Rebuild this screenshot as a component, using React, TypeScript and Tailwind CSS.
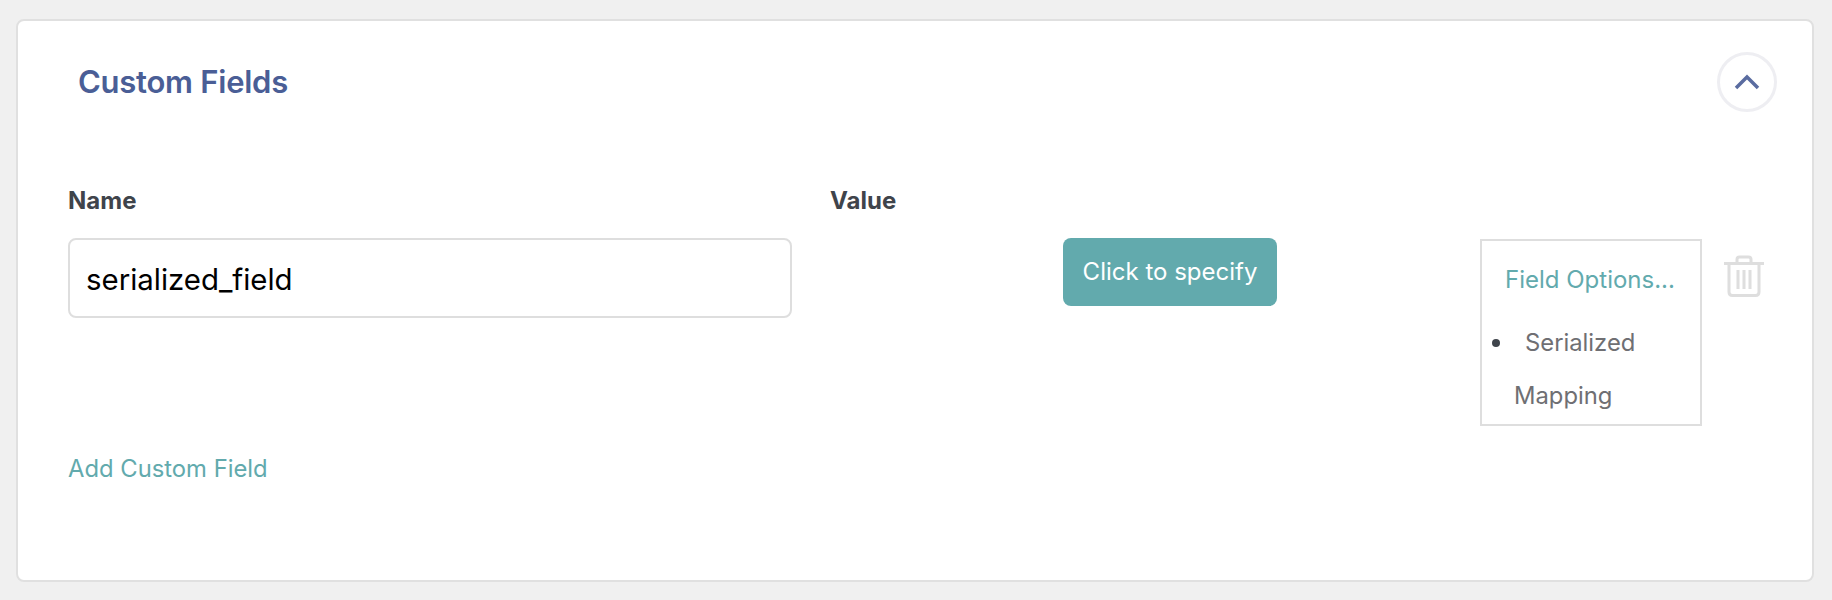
import React from "react";

const font = { fontFamily: "Inter, sans-serif" };

const TrashIcon = () => (
  <svg viewBox="0 0 40 42" className="w-[40px] h-[42px]" fill="none" stroke="#dedede" strokeWidth="3">
    <path d="M0 8.5h40" />
    <path d="M13 8V4.5Q13 2 15.5 2h9Q27 2 27 4.5V8" />
    <path d="M5 9v28q0 3.5 3.5 3.5h23q3.5 0 3.5-3.5V9" />
    <path d="M14 15v19M20 15v19M26 15v19" />
  </svg>
);

export default function App() {
  return (
    <div className="min-h-[600px] bg-[#f0f0f0] pt-[19px] pl-[16px] pr-[18px]" style={font}>
      <div className="h-[563px] rounded-[8px] border-2 border-[#e0e0e0] bg-white pl-[50px] pr-[35px]">
        {/* Header */}
        <div className="flex justify-between items-start pt-[31px] h-[166px]">
          <h2 className="ml-[10px] mt-[13px] text-[31px] leading-[34px] font-semibold tracking-[-0.25px] text-[#4a5e96]">Custom Fields</h2>
          <button className="flex items-center justify-center w-[60px] h-[60px] rounded-full border-[3px] border-[#eeeef2] bg-white">
            <svg viewBox="0 0 26 16" className="w-[26px] h-[16px]" fill="none" stroke="#5a6ca0" strokeWidth="3.5">
              <path d="M2 14L13 3l11 11" />
            </svg>
          </button>
        </div>

        {/* Field row */}
        <div className="flex items-start">
          <div className="w-[762px]">
            <div className="text-[24px] leading-[28px] font-bold text-[#3f444b] mb-[23px]">Name</div>
            <input
              readOnly
              value="serialized_field"
              className="w-[724px] h-[80px] rounded-[8px] border-2 border-[#dedede] px-[16px] pt-[2px] text-[29.4px] text-black outline-none"
            />
          </div>
          <div className="w-[650px]">
            <div className="text-[24px] leading-[28px] font-bold text-[#3f444b] mb-[23px]">Value</div>
            <button className="ml-[233px] w-[214px] h-[68px] rounded-[8px] bg-[#62aaad] text-[24px] text-white whitespace-nowrap">
              Click to specify
            </button>
          </div>
          <div className="mt-[52px] flex items-start">
            <div className="w-[222px] h-[187px] border-2 border-[#dedede] text-[23.8px] text-[#6f6f73]">
              <div className="pl-[23px] pt-[23px] leading-[32px] text-[24px] text-[#62aaad] whitespace-nowrap">Field Options...</div>
              <div className="flex items-center pl-[10px] pt-[31px] leading-[32px]">
                <span className="w-[8px] h-[8px] rounded-full bg-[#3f444b] mr-[25px]" />
                Serialized
              </div>
              <div className="pl-[32px] pt-[21px] leading-[32px]">Mapping</div>
            </div>
            <div className="ml-[22px] mt-[16px]">
              <TrashIcon />
            </div>
          </div>
        </div>

        {/* Add field */}
        <div className="pt-[27px] text-[23.8px] leading-[32px] text-[#62aaad]">Add Custom Field</div>
      </div>
    </div>
  );
}
